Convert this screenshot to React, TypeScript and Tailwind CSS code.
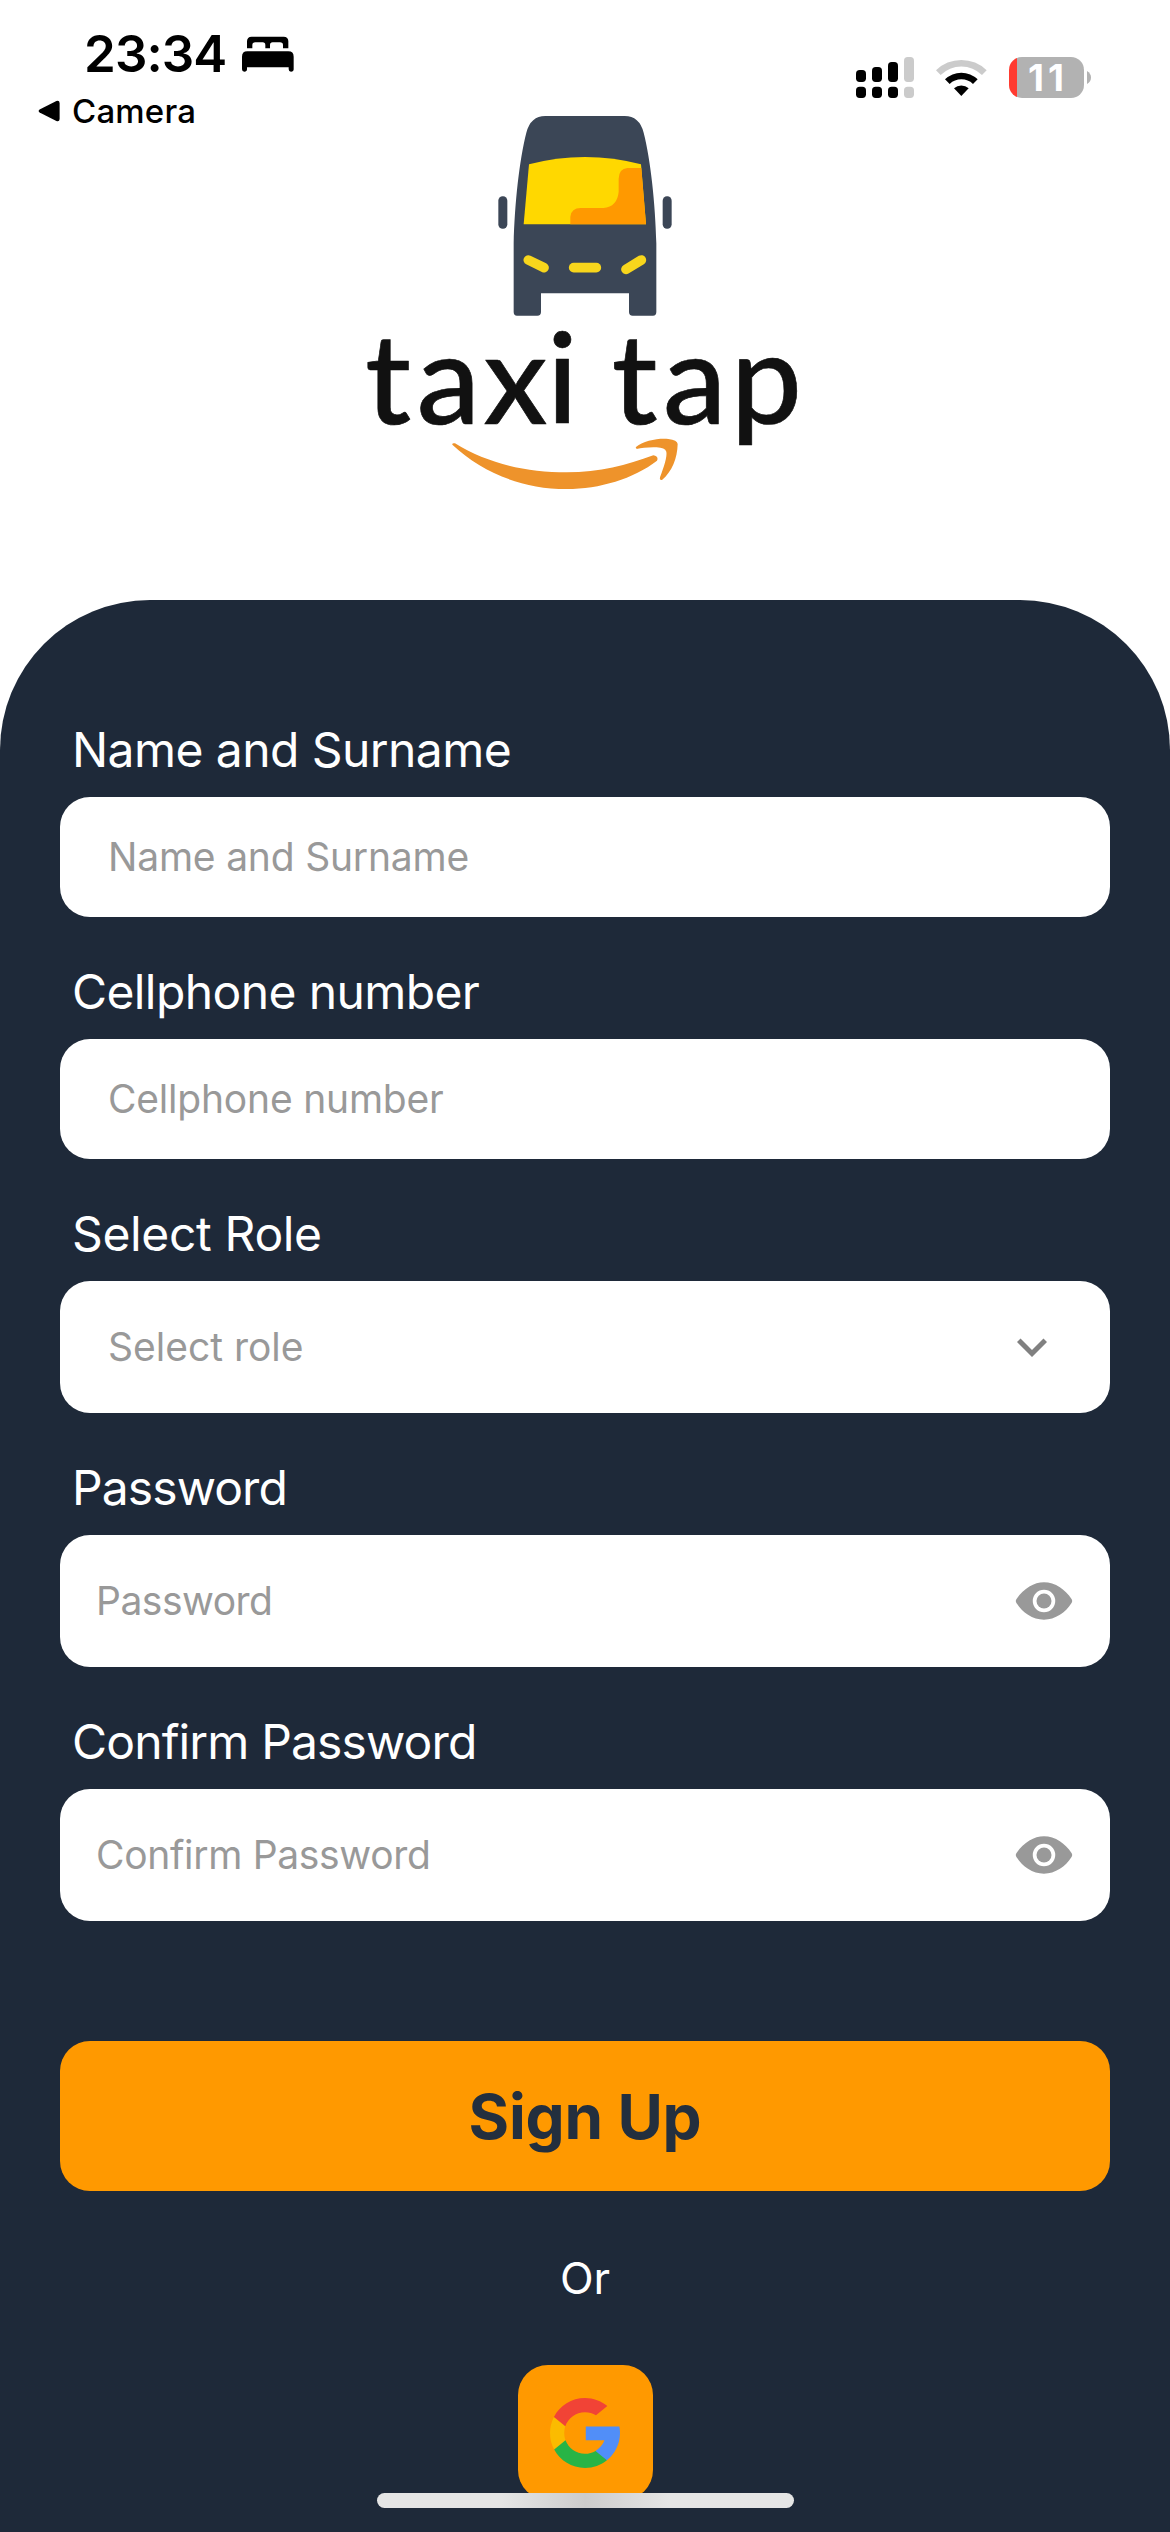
import React from 'react';
import { IoEye } from 'react-icons/io5';

function StatusBar() {
  return (
    <div className="flex h-[131px] items-start justify-between">
      <div className="flex flex-col pt-[24px]">
        <div className="flex h-[60px] items-center pl-[84px]">
          <span className="w-[158px] text-[51px] leading-[60px] font-[560] tracking-[-0.9px] whitespace-nowrap text-black">23:34</span>
          <svg className="h-[36px] w-[52px]" viewBox="0 0 156 108">
            <path d="M15 37V16Q15 2 29 2H125Q139 2 139 16V37H123V27Q123 19 114 19H92Q84 19 84 27V37H70V27Q70 19 62 19H40Q31 19 31 27V37Z" />
            <path d="M0 62Q0 46 16 46H139Q155 46 155 62V100Q155 107 147 107Q140 107 140 100V94H15V100Q15 107 7 107Q0 107 0 100Z" />
          </svg>
        </div>
        <div className="flex h-[40px] items-center pt-[14px] pl-[38px]">
          <svg className="mr-[12px] h-[22px] w-[22px]" viewBox="0 0 22 22">
            <path d="M1.6 9.6L18.4 1Q21.4 0 21.6 3V19Q21.4 22 18.4 21L1.6 12.4Q-.4 11 1.6 9.6Z" />
          </svg>
          <span className="text-[33px] leading-[40px] font-[460] tracking-[0.2px] text-black">Camera</span>
        </div>
      </div>

      <div className="flex items-start pt-[57px] pr-[79px]">
        <svg className="mr-[22px] h-[41px] w-[58px]" viewBox="0 0 174 123">
          <g fill="#000">
            <rect x="0" y="39" width="30" height="36" rx="11" />
            <rect x="48" y="30" width="30" height="45" rx="11" />
            <rect x="96" y="15" width="30" height="60" rx="11" />
            <rect x="0" y="89" width="30" height="34" rx="11" />
            <rect x="48" y="89" width="30" height="34" rx="11" />
            <rect x="96" y="89" width="30" height="34" rx="11" />
          </g>
          <g fill="#cbcbcb">
            <rect x="144" y="0" width="30" height="75" rx="11" />
            <rect x="144" y="89" width="30" height="34" rx="11" />
          </g>
        </svg>
        <svg className="mt-px mr-[22px] h-[39px] w-[51px]" viewBox="0 0 153 117">
          <path d="M0 37A108 108 0 0 1 152 37L138 51A88 88 0 0 0 14 51Z" fill="#cbcbcb" />
          <path d="M27 64A70 70 0 0 1 125 64L111 78A51 51 0 0 0 41 78Z" />
          <path d="M54 91A33 33 0 0 1 98 91L76 114Z" />
        </svg>
        <div className="flex items-center">
          <div className="flex h-[41px] w-[75px] items-center rounded-[13px] bg-[linear-gradient(90deg,#ff3b30_8px,#b2b2b2_8px)] pl-[19px]">
            <span className="text-[37px] leading-[41px] font-bold tracking-[4px] text-white">11</span>
          </div>
          <svg className="ml-[3px] h-[13px] w-[4px]" viewBox="0 0 4 13">
            <path d="M0 0Q4 2.5 4 6.5Q4 10.5 0 13Z" fill="#b2b2b2" />
          </svg>
        </div>
      </div>
    </div>
  );
}

function Logo() {
  return (
    <svg className="-mt-[31px] h-[400px] w-[500px]" viewBox="0 0 1500 1200">
      <g fill="#3b4656">
        <path d="M521 636Q521 647 531 647H592Q603 647 603 636V580H867V636Q867 647 878 647H939Q949 647 949 636V430C946 310 932 180 911 98Q898 48 854 48H616Q572 48 559 98C538 180 524 310 521 430Z" />
        <rect x="475" y="289" width="27" height="97" rx="13" />
        <rect x="968" y="289" width="27" height="97" rx="13" />
      </g>
      <path d="M567 193Q650 171 735 171Q820 171 903 193L918 373H551Z" fill="#ffd800" />
      <path d="M904 204H862Q837 206 836 236V275Q832 320 790 324H722Q694 324 691 350V373H918Z" fill="#ff9900" />
      <g stroke="#f8d61c" strokeWidth="29" strokeLinecap="round">
        <path d="M565 480L612 503" />
        <path d="M701 503H769" />
        <path d="M904 480L858 508" />
      </g>
      <text
        x="76 230.5 430.5 621 720 815 969 1172"
        y="971"
        fill="#111"
        stroke="#111"
        strokeWidth="2"
        strokeLinejoin="round"
        className="font-['Lato',sans-serif] text-[380px] font-medium"
      >
        taxi tap
      </text>
      <g fill="#ee932b">
        <path d="M337 1034Q336 1028 345 1030C440 1090 560 1117 680 1117C780 1117 860 1095 940 1066Q957 1069 951 1082C880 1136 780 1167 680 1167C540 1167 425 1115 337 1034Z" />
        <path d="M887 1042C910 1021 958 1014 985 1017Q1012 1020 1013 1032C1012 1075 996 1115 966 1140Q958 1142 960 1132C972 1100 982 1070 979 1055Q975 1043 950 1042C925 1041 905 1044 890 1047Z" />
      </g>
    </svg>
  );
}

function Field(props: {
  label: string;
  placeholder: string;
  labelClass: string;
  boxClass: string;
  children?: React.ReactNode;
}) {
  return (
    <div className="flex flex-col">
      <span className={`mb-[18px] text-[48px] leading-[58px] whitespace-nowrap text-white ${props.labelClass}`}>{props.label}</span>
      <div className={`flex items-center justify-between rounded-[30px] bg-white text-[39px] text-[#999999] ${props.boxClass}`}>
        <span>{props.placeholder}</span>
        {props.children}
      </div>
    </div>
  );
}

function GoogleIcon() {
  return (
    <svg className="h-[70px] w-[70px]" viewBox="0 0 512 512">
      <path fill="#FBBB00" d="M113.47,309.408L95.648,375.94l-65.139,1.378C11.042,341.211,0,299.9,0,256c0-42.451,10.324-82.483,28.624-117.732h0.014l57.992,10.632l25.404,57.644c-5.317,15.501-8.215,32.141-8.215,49.456C103.821,274.792,107.225,292.797,113.47,309.408z" />
      <path fill="#518EF8" d="M507.527,208.176C510.467,223.662,512,239.655,512,256c0,18.328-1.927,36.206-5.598,53.451c-12.462,58.683-45.025,109.925-90.134,146.187l-0.014-0.014l-73.044-3.727l-10.338-64.535c29.932-17.554,53.324-45.025,65.646-77.911h-136.89V208.176h138.887L507.527,208.176z" />
      <path fill="#28B446" d="M416.253,455.624l0.014,0.014C372.396,490.901,316.666,512,256,512c-97.491,0-182.252-54.491-225.491-134.681l82.961-67.91c21.619,57.698,77.278,98.771,142.53,98.771c28.047,0,54.323-7.582,76.87-20.818L416.253,455.624z" />
      <path fill="#F14336" d="M419.404,58.936l-82.933,67.896c-23.335-14.586-50.919-23.012-80.471-23.012c-66.729,0-123.429,42.957-143.965,102.724l-83.397-68.276h-0.014C71.23,56.123,157.06,0,256,0C318.115,0,375.068,22.126,419.404,58.936z" />
    </svg>
  );
}

export default function App() {
  return (
    <div className="relative flex h-[2532px] w-[1170px] flex-col overflow-hidden bg-white font-['Inter',sans-serif]">
      <header className="flex h-[600px] shrink-0 flex-col">
        <StatusBar />
        <div className="flex pl-[340px]">
          <Logo />
        </div>
      </header>

      <main className="flex grow flex-col rounded-t-[150px] bg-[#1e2939] px-[60px] pt-[121px]">
        <div className="flex flex-col gap-[46px]">
          <Field label="Name and Surname" placeholder="Name and Surname" labelClass="pl-[12px] tracking-[-0.57px]" boxClass="h-[120px] px-[48px] tracking-[-0.2px]" />
          <Field label="Cellphone number" placeholder="Cellphone number" labelClass="pl-[12px] tracking-[-0.6px]" boxClass="h-[120px] px-[48px] tracking-[-0.2px]" />
          <Field label="Select Role" placeholder="Select role" labelClass="pl-[12px] tracking-[-0.35px]" boxClass="h-[132px] px-[48px]">
            <svg className="h-[60px] w-[60px]" viewBox="0 0 24 24" fill="#808080">
              <path d="M7.41 8.59L12 13.17l4.59-4.58L18 10l-6 6-6-6z" />
            </svg>
          </Field>
          <Field label="Password" placeholder="Password" labelClass="pl-[12px] tracking-[-0.9px]" boxClass="h-[132px] px-[36px] tracking-[-0.5px]">
            <IoEye className="h-[60px] w-[60px]" />
          </Field>
          <Field label="Confirm Password" placeholder="Confirm Password" labelClass="pl-[12px] tracking-[-0.85px]" boxClass="h-[132px] px-[36px] tracking-[-0.32px]">
            <IoEye className="h-[60px] w-[60px]" />
          </Field>
        </div>

        <button className="mt-[120px] h-[150px] shrink-0 rounded-[30px] bg-[#ff9900] text-[62px] font-bold tracking-[-0.2px] text-[#232f3e]">
          Sign Up
        </button>
        <span className="my-[57px] text-center text-[44px] leading-[60px] text-white">Or</span>
        <button className="flex h-[135px] w-[135px] shrink-0 items-center justify-center self-center rounded-[30px] bg-[#ff9900]">
          <GoogleIcon />
        </button>
      </main>

      <div className="absolute bottom-[24px] left-[377px] h-[15px] w-[417px] rounded-full bg-linear-to-r from-[#e5e5e5] from-30% via-[#cccccc] to-[#e5e5e5] to-70%" />
    </div>
  );
}
